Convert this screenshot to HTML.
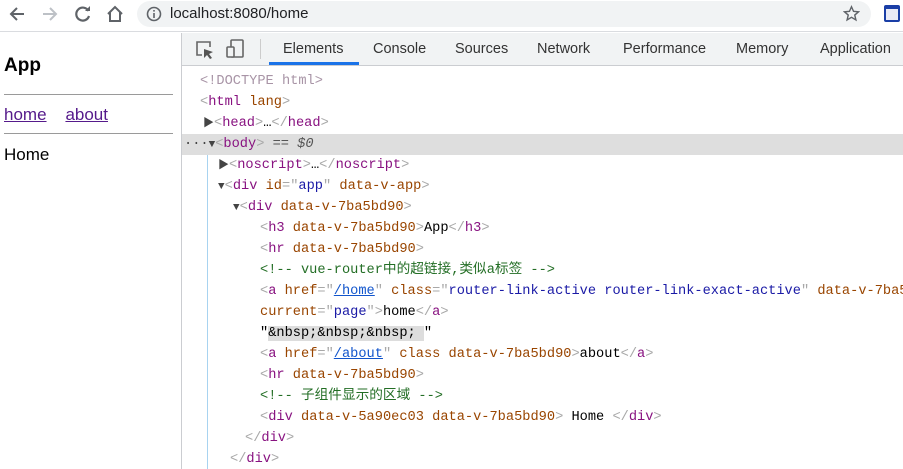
<!DOCTYPE html>
<html><head><style>
*{margin:0;padding:0;box-sizing:border-box}
html,body{width:903px;height:469px;overflow:hidden}
body{background:#fff;font-family:"Liberation Sans",sans-serif;position:relative}
.top{position:absolute;left:0;top:0;width:903px;height:32px;background:#fff;border-bottom:1px solid #dadce0}
.url{position:absolute;left:137px;top:1px;width:734px;height:26px;border-radius:13px;background:#f1f3f4;font-size:15px;color:#202124;line-height:26px;padding-left:33px}
.page{position:absolute;left:0;top:33px;width:181px;height:436px}
.dt{position:absolute;left:181px;top:33px;width:722px;height:436px;border-left:1px solid #cbcdd1;overflow:hidden}
.tabs{height:33px;background:#f1f3f4;border-bottom:1px solid #cbcdd1;position:relative;font-size:14.5px;color:#333}
.tabs span{position:absolute;top:8px}
.code{position:absolute;left:0;top:37px;width:722px;height:400px;font-family:"Liberation Mono","Noto Sans CJK SC",monospace;font-size:13.66px;white-space:pre}
.l{position:absolute;height:21px;line-height:21px}
.t{color:#881280}.a{color:#994500}.v{color:#1a1aa6}.g{color:#a8a8a8}.c{color:#236e25}.k{color:#a894a6}
.tri{font-size:11px;color:#444}
</style></head><body>
<div class="top">
<svg style="position:absolute;left:8px;top:5px" width="18" height="18" viewBox="0 0 18 18"><path d="M16 9H3M9 3L3 9L9 15" fill="none" stroke="#5f6368" stroke-width="2"/></svg>
<svg style="position:absolute;left:41px;top:5px" width="18" height="18" viewBox="0 0 18 18"><path d="M2 9H15M9 3L15 9L9 15" fill="none" stroke="#bdc1c6" stroke-width="2"/></svg>
<svg style="position:absolute;left:74px;top:5px" width="18" height="18" viewBox="0 0 18 18"><path d="M14.5 6A6.5 6.5 0 1 0 15 11" fill="none" stroke="#5f6368" stroke-width="2.2"/><path d="M11 6H16V1Z" fill="#5f6368"/></svg>
<svg style="position:absolute;left:106px;top:5px" width="18" height="18" viewBox="0 0 18 18"><path d="M2 9 L9 2 L16 9 M4 7 V16 H14 V7" fill="none" stroke="#5f6368" stroke-width="2"/></svg>
<div class="url"><svg style="position:absolute;left:9px;top:5px" width="16" height="16"><circle cx="8" cy="8" r="6.5" fill="none" stroke="#5f6368" stroke-width="1.6"/><rect x="7.2" y="7" width="1.6" height="5" fill="#5f6368"/><rect x="7.2" y="4" width="1.6" height="1.6" fill="#5f6368"/></svg>localhost:8080/home</div>
<svg style="position:absolute;left:843px;top:5px" width="17" height="17" viewBox="0 0 24 24"><path d="M12 2.5l2.9 6.5 7 .6-5.3 4.6 1.6 6.9L12 17.4 5.8 21.1l1.6-6.9L2.1 9.6l7-.6z" fill="none" stroke="#5f6368" stroke-width="2"/></svg>
<div style="position:absolute;left:884px;top:5px;width:16px;height:17px;border:2px solid #1a3ea6;border-top-width:4px;border-radius:2px;background:#e8eaf6"></div>
</div>
<div class="page">
<div style="position:absolute;left:4px;top:22px;font-weight:bold;font-size:19px">App</div>
<div style="position:absolute;left:4px;top:61px;width:169px;border-top:1px solid #9a9a9a"></div>
<div style="position:absolute;left:4px;top:72px;font-size:17px;color:#551a8b"><u>home</u>&nbsp;&nbsp;&nbsp;&nbsp;<u>about</u></div>
<div style="position:absolute;left:4px;top:100px;width:169px;border-top:1px solid #9a9a9a"></div>
<div style="position:absolute;left:4px;top:112px;font-size:17px">Home</div>
</div>
<div class="dt">
<div class="tabs">
<svg style="position:absolute;left:13px;top:7px" width="20" height="20"><path d="M7 15H2V2H15V7" fill="none" stroke="#666" stroke-width="1.6"/><path d="M9 9L18 12L14 14L17 18L15 19L12 15L9 18Z" fill="#555"/></svg>
<svg style="position:absolute;left:44px;top:6px" width="20" height="20"><rect x="5" y="1" width="12" height="17" rx="1" fill="none" stroke="#666" stroke-width="1.6"/><rect x="1" y="8" width="7" height="10" rx="1" fill="#f1f3f4" stroke="#666" stroke-width="1.6"/></svg>
<div style="position:absolute;left:78px;top:6px;width:1px;height:20px;background:#ccc"></div>
<span style="left:101px">Elements</span>
<div style="position:absolute;left:87px;top:29px;width:90px;height:3px;background:#1a73e8"></div>
<span style="left:191px">Console</span>
<span style="left:273px">Sources</span>
<span style="left:355px">Network</span>
<span style="left:441px">Performance</span>
<span style="left:554px">Memory</span>
<span style="left:638px">Application</span>
</div>
<div class="code">
<div style="position:absolute;left:0;top:64px;width:722px;height:21px;background:#dedede"></div>
<div style="position:absolute;left:25px;top:85px;width:1px;height:315px;background:#a8d3f0"></div>
<div class="l" style="left:18px;top:1px"><span class="k">&lt;!DOCTYPE html&gt;</span></div>
<div class="l" style="left:18px;top:22px"><span class="t"><span class="g">&lt;</span>html <span class="a">lang</span><span class="g">&gt;</span></span></div>
<div class="l" style="left:21px;top:43px"><span class="tri">&#9654;</span><span class="g">&lt;</span><span class="t">head</span><span class="g">&gt;</span>…<span class="g">&lt;/</span><span class="t">head</span><span class="g">&gt;</span></div>
<div class="l" style="left:2px;top:64px"><span style="color:#444">···</span><span class="tri">&#9660;</span><span class="g">&lt;</span><span class="t">body</span><span class="g">&gt;</span> <i style="color:#555">== $0</i></div>
<div class="l" style="left:36px;top:85px"><span class="tri">&#9654;</span><span class="g">&lt;</span><span class="t">noscript</span><span class="g">&gt;</span>…<span class="g">&lt;/</span><span class="t">noscript</span><span class="g">&gt;</span></div>
<div class="l" style="left:36px;top:106px"><span class="tri">&#9660;</span><span class="g">&lt;</span><span class="t">div</span> <span class="a">id</span><span class="g">="</span><span class="v">app</span><span class="g">"</span> <span class="a">data-v-app</span><span class="g">&gt;</span></div>
<div class="l" style="left:51px;top:127px"><span class="tri">&#9660;</span><span class="g">&lt;</span><span class="t">div</span> <span class="a">data-v-7ba5bd90</span><span class="g">&gt;</span></div>
<div class="l" style="left:78px;top:148px"><span class="g">&lt;</span><span class="t">h3</span> <span class="a">data-v-7ba5bd90</span><span class="g">&gt;</span>App<span class="g">&lt;/</span><span class="t">h3</span><span class="g">&gt;</span></div>
<div class="l" style="left:78px;top:169px"><span class="g">&lt;</span><span class="t">hr</span> <span class="a">data-v-7ba5bd90</span><span class="g">&gt;</span></div>
<div class="l c" style="left:78px;top:190px">&lt;!-- vue-router中的超链接,类似a标签 --&gt;</div>
<div class="l" style="left:78px;top:211px"><span class="g">&lt;</span><span class="t">a</span> <span class="a">href</span><span class="g">="</span><u style="color:#1155cc">/home</u><span class="g">"</span> <span class="a">class</span><span class="g">="</span><span class="v">router-link-active router-link-exact-active</span><span class="g">"</span> <span class="a">data-v-7ba5bd90</span></div>
<div class="l" style="left:78px;top:232px"><span class="a">current</span><span class="g">="</span><span class="v">page</span><span class="g">"&gt;</span>home<span class="g">&lt;/</span><span class="t">a</span><span class="g">&gt;</span></div>
<div class="l" style="left:78px;top:253px">"<span style="background:#ddd">&amp;nbsp;&amp;nbsp;&amp;nbsp; </span>"</div>
<div class="l" style="left:78px;top:274px"><span class="g">&lt;</span><span class="t">a</span> <span class="a">href</span><span class="g">="</span><u style="color:#1155cc">/about</u><span class="g">"</span> <span class="a">class data-v-7ba5bd90</span><span class="g">&gt;</span>about<span class="g">&lt;/</span><span class="t">a</span><span class="g">&gt;</span></div>
<div class="l" style="left:78px;top:295px"><span class="g">&lt;</span><span class="t">hr</span> <span class="a">data-v-7ba5bd90</span><span class="g">&gt;</span></div>
<div class="l c" style="left:78px;top:316px">&lt;!-- 子组件显示的区域 --&gt;</div>
<div class="l" style="left:78px;top:337px"><span class="g">&lt;</span><span class="t">div</span> <span class="a">data-v-5a90ec03 data-v-7ba5bd90</span><span class="g">&gt;</span> Home <span class="g">&lt;/</span><span class="t">div</span><span class="g">&gt;</span></div>
<div class="l" style="left:63px;top:358px"><span class="g">&lt;/</span><span class="t">div</span><span class="g">&gt;</span></div>
<div class="l" style="left:48px;top:379px"><span class="g">&lt;/</span><span class="t">div</span><span class="g">&gt;</span></div>
</div>
</div>
</body></html>
